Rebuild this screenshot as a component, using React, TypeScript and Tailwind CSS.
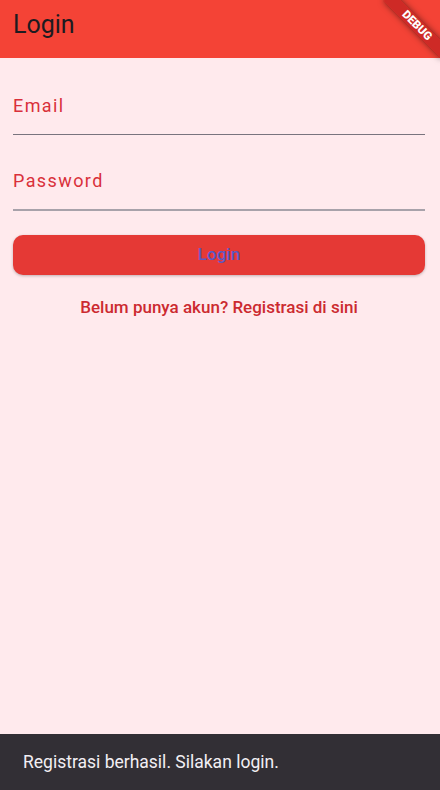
import React from "react";

export default function App() {
  return (
    <div
      className="relative w-[440px] h-[790px] overflow-hidden bg-[#ffeaed] flex flex-col"
      style={{ fontFamily: "Roboto, 'Liberation Sans', sans-serif" }}
    >
      {/* App bar */}
      <header className="h-[58px] bg-[#f44336] flex items-center pl-[13px] shrink-0">
        <h1 className="text-[25px] leading-none text-[#1d1b20] font-normal -mt-[10px]">Login</h1>
      </header>

      {/* Form */}
      <main className="flex-1 flex flex-col pl-[13px] pr-[15px]">
        <div className="h-[77px] flex flex-col justify-end">
          <label className="text-[18px] tracking-[1.4px] text-[#d9303a] leading-none mb-[19px]">Email</label>
          <div className="h-px bg-[#79747e]" />
        </div>
        <div className="h-[76px] flex flex-col justify-end">
          <label className="text-[18px] tracking-[1.4px] text-[#d9303a] leading-none mb-[19px]">Password</label>
          <div className="h-[2px] bg-[#a8a2aa]" />
        </div>

        <button className="mt-[24px] h-[40px] rounded-[10px] bg-[#e53935] shadow-[0_1px_3px_rgba(0,0,0,0.25)] text-[#5b58c4] text-[17px] font-medium">
          Login
        </button>

        <p className="mt-[20px] text-center text-[17px] font-medium text-[#cc2a30]">
          Belum punya akun? Registrasi di sini
        </p>
      </main>

      {/* Snackbar */}
      <div className="h-[56px] bg-[#322f35] flex items-center pl-[23px] shrink-0">
        <span className="text-[17.5px] text-[#f2eff4]">Registrasi berhasil. Silakan login.</span>
      </div>

      {/* Debug banner */}
      <div className="absolute left-[376px] top-[19px] w-[82px] h-[13px] rotate-45 bg-[rgba(183,28,28,0.63)] shadow-[0_0_6px_rgba(0,0,0,0.5)] flex items-center justify-center">
        <span className="text-[11.5px] font-black text-white leading-none">DEBUG</span>
      </div>
    </div>
  );
}
